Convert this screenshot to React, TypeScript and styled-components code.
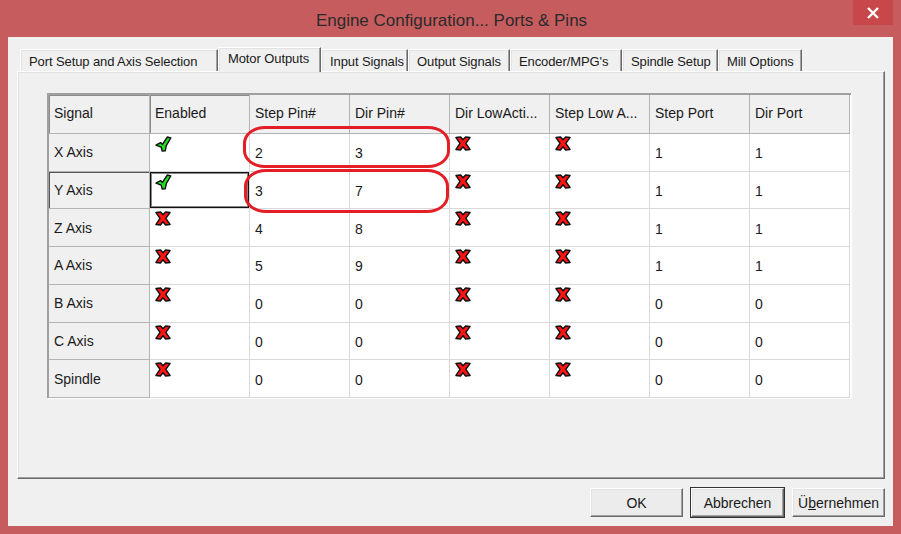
import React from "react";
import styled, { createGlobalStyle } from "styled-components";

type Cell = string | "ok" | "no";

interface AxisRow {
  name: string;
  cells: Cell[];
}

const columns = [
  "Signal",
  "Enabled",
  "Step Pin#",
  "Dir Pin#",
  "Dir LowActi...",
  "Step Low A...",
  "Step Port",
  "Dir Port",
];

const rows: AxisRow[] = [
  { name: "X Axis", cells: ["ok", "2", "3", "no", "no", "1", "1"] },
  { name: "Y Axis", cells: ["ok", "3", "7", "no", "no", "1", "1"] },
  { name: "Z Axis", cells: ["no", "4", "8", "no", "no", "1", "1"] },
  { name: "A Axis", cells: ["no", "5", "9", "no", "no", "1", "1"] },
  { name: "B Axis", cells: ["no", "0", "0", "no", "no", "0", "0"] },
  { name: "C Axis", cells: ["no", "0", "0", "no", "no", "0", "0"] },
  { name: "Spindle", cells: ["no", "0", "0", "no", "no", "0", "0"] },
];

const tabs = [
  { label: "Port Setup and Axis Selection", width: 198 },
  { label: "Motor Outputs", width: 103, active: true },
  { label: "Input Signals", width: 87 },
  { label: "Output Signals", width: 102 },
  { label: "Encoder/MPG's", width: 112 },
  { label: "Spindle Setup", width: 96 },
  { label: "Mill Options", width: 84 },
];

// green tick used for "enabled"
const CheckIcon = () => (
  <svg width="17" height="16" viewBox="0 0 17 16">
    <path
      d="M1 9.2 L5.6 6.6 L7.4 8.4 L12.4 1 L15.8 2 L11.4 9.4 L10.2 14.8 L7.2 15 L6.2 11.2 Z"
      fill="#22dd22"
      stroke="#111"
      strokeWidth="1.4"
      strokeLinejoin="round"
    />
  </svg>
);

// red cross used for "disabled"
const CrossIcon = () => (
  <svg width="16" height="15" viewBox="0 0 16 15">
    <path
      d="M1 1.6 L5.6 1 L8 3.8 L10.6 1 L15 1.6 L10.8 7.4 L15 13.4 L10.6 14 L8 10.8 L5.4 14 L1 13.4 L5 7.4 Z"
      fill="#ff1414"
      stroke="#111"
      strokeWidth="1.5"
      strokeLinejoin="round"
    />
  </svg>
);

const App: React.FC = () => {
  return (
    <>
      <GlobalStyle />
      <Window>
        <TitleBar>
          <span />
          <Title>Engine Configuration... Ports &amp; Pins</Title>
          <CloseButton>
            <svg width="14" height="12" viewBox="0 0 14 12">
              <path d="M2 1 L12 11 M12 1 L2 11" stroke="#fff" strokeWidth="2.4" />
            </svg>
          </CloseButton>
        </TitleBar>
        <Client>
          <TabStrip>
            {tabs.map((t) => (
              <Tab key={t.label} $active={!!t.active} style={{ width: t.width }}>
                {t.label}
              </Tab>
            ))}
          </TabStrip>
          <Panel>
            <GridWrap>
              <Grid>
                {columns.map((c, i) => (
                  <HeaderCell key={c} $pressed={i < 2}>
                    {c}
                  </HeaderCell>
                ))}
                {rows.map((r, ri) => (
                  <React.Fragment key={r.name}>
                    <RowHeader $current={ri === 1}>{r.name}</RowHeader>
                    {r.cells.map((c, ci) => (
                      <DataCell
                        key={ci}
                        $icon={c === "ok" || c === "no"}
                        $selected={ri === 1 && ci === 0}
                      >
                        {c === "ok" ? <CheckIcon /> : c === "no" ? <CrossIcon /> : c}
                      </DataCell>
                    ))}
                  </React.Fragment>
                ))}
              </Grid>
              <Highlight style={{ left: 196, top: 33, width: 207, height: 42 }} />
              <Highlight style={{ left: 197, top: 76, width: 205, height: 44 }} />
            </GridWrap>
          </Panel>
          <ButtonRow>
            <Button>OK</Button>
            <Button $default>Abbrechen</Button>
            <Button>
              Ü<u>b</u>ernehmen
            </Button>
          </ButtonRow>
        </Client>
      </Window>
    </>
  );
};

const GlobalStyle = createGlobalStyle`
  body {
    margin: 0;
    font-family: "Liberation Sans", Arial, sans-serif;
    background: #fff;
  }
`;

const Window = styled.div`
  width: 901px;
  height: 534px;
  background: #c75c5f;
  display: flex;
  flex-direction: column;
  box-sizing: border-box;
`;

const TitleBar = styled.div`
  height: 37px;
  display: grid;
  grid-template-columns: 1fr auto 1fr;
  align-items: start;
`;

const Title = styled.div`
  font-size: 17px;
  color: #2a2a2a;
  line-height: 41px;
  padding-left: 2px;
`;

const CloseButton = styled.div`
  justify-self: end;
  margin-right: 8px;
  width: 40px;
  height: 25px;
  background: #c8474b;
  display: flex;
  align-items: center;
  justify-content: center;
`;

const Client = styled.div`
  flex: 1;
  margin: 0 8px 8px;
  background: #f0f0f0;
  padding: 10px 8px 0 9px;
  display: flex;
  flex-direction: column;
`;

const TabStrip = styled.div`
  height: 24px;
  display: flex;
  align-items: flex-end;
  padding-left: 3px;
  position: relative;
  z-index: 1;
`;

const Tab = styled.div<{ $active: boolean }>`
  box-sizing: border-box;
  height: ${(p) => (p.$active ? "25px" : "22px")};
  margin-bottom: ${(p) => (p.$active ? "-1px" : "0")};
  padding: ${(p) => (p.$active ? "3px 0 0 9px" : "4px 0 0 8px")};
  background: #f0f0f0;
  border-top: 1px solid #fff;
  border-left: 1px solid #fff;
  border-right: 1px solid #696969;
  box-shadow: inset -1px 0 #a0a0a0, inset 1px 1px #e3e3e3;
  font-size: 13px;
  letter-spacing: -0.1px;
  color: #1a1a1a;
  white-space: nowrap;
  overflow: hidden;
`;

const Panel = styled.div`
  height: 408px;
  box-sizing: border-box;
  background: #f0f0f0;
  border-top: 1px solid #fff;
  border-left: 1px solid #fff;
  border-right: 1px solid #696969;
  border-bottom: 1px solid #696969;
  box-shadow: inset -1px -1px #a0a0a0, inset 1px 1px #e3e3e3;
  padding: 21px 0 0 29px;
`;

const GridWrap = styled.div`
  position: relative;
  width: 804px;
`;

const Grid = styled.div`
  display: grid;
  grid-template-columns: 101px repeat(7, 100px);
  grid-template-rows: 39px repeat(7, 1fr);
  height: 303px;
  border-top: 2px solid #a0a0a0;
  border-left: 2px solid #a0a0a0;
  box-shadow: 1px 1px #fdfdfd;
  background: #fff;
`;

const BaseCell = styled.div`
  box-sizing: border-box;
  display: flex;
  align-items: center;
  padding-left: 5px;
  font-size: 14px;
  color: #1a1a1a;
  white-space: nowrap;
  overflow: hidden;
`;

const HeaderCell = styled(BaseCell)<{ $pressed: boolean }>`
  background: #f0f0f0;
  border-right: 1px solid #b4b4b4;
  border-bottom: 1px solid #b4b4b4;
  padding-bottom: 2px;
  box-shadow: ${(p) => (p.$pressed ? "inset 1px 1px #8c8c8c" : "none")};
`;

const RowHeader = styled(BaseCell)<{ $current: boolean }>`
  background: #f0f0f0;
  border-right: 1px solid #b4b4b4;
  border-bottom: 1px solid #b4b4b4;
  box-shadow: ${(p) => (p.$current ? "inset 1px 1px #555" : "none")};
`;

const DataCell = styled(BaseCell)<{ $icon: boolean; $selected: boolean }>`
  background: #fff;
  border-right: 1px solid #d9d9d9;
  border-bottom: 1px solid #d9d9d9;
  align-items: ${(p) => (p.$icon ? "flex-start" : "center")};
  padding-top: 2px;
  color: #1a1a1a;
  box-shadow: ${(p) => (p.$selected ? "inset 0 0 0 1px #111, inset 0 0 0 2px #888" : "none")};
`;

const Highlight = styled.div`
  position: absolute;
  box-sizing: border-box;
  border: 3px solid #e31e26;
  border-radius: 22px / 17px;
  pointer-events: none;
`;

const ButtonRow = styled.div`
  display: flex;
  justify-content: flex-end;
  gap: 8px;
  padding-top: 9px;
`;

const Button = styled.div<{ $default?: boolean }>`
  box-sizing: border-box;
  width: 93px;
  height: 29px;
  display: flex;
  align-items: center;
  justify-content: center;
  font-size: 14px;
  color: #1a1a1a;
  background: #ececec;
  border-top: 1px solid #fff;
  border-left: 1px solid #fff;
  border-right: 1px solid #696969;
  border-bottom: 1px solid #696969;
  box-shadow: inset -1px -1px #a0a0a0, inset 1px 1px #e3e3e3
    ${(p) => (p.$default ? ", 0 0 0 1px #333" : "")};

  u {
    text-decoration-thickness: 1px;
  }
`;

export default App;
